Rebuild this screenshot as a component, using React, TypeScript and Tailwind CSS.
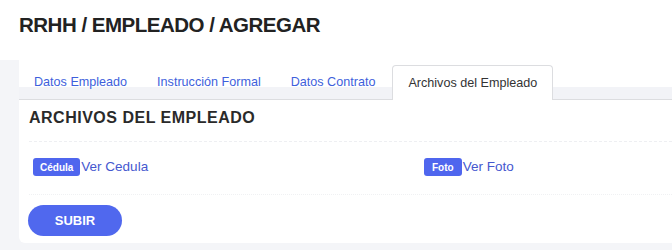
export default function App() {
  const tabs = ['Datos Empleado', 'Instrucción Formal', 'Datos Contrato'];

  return (
    <div className="w-[672px] h-[250px] overflow-hidden bg-white font-['Liberation_Sans',Arial,sans-serif]">
      <div className="h-[60px] pl-[19px] pt-[12px]">
        <h1 className="text-[20.5px] leading-[25px] font-bold tracking-[-0.5px] text-[#222]">RRHH / EMPLEADO / AGREGAR</h1>
      </div>

      <div className="bg-[#f4f5f8] pl-[19px]">
        <div className="h-[40px] flex items-end bg-[linear-gradient(to_bottom,#ffffff_0,#ffffff_27px,#f2f3f7_27px)] border-b border-[#dcdde0]">
          {tabs.map((t) => (
            <div key={t} className="h-[34px] px-[15px] flex items-center text-[12.6px] text-[#3e5fdc]">
              {t}
            </div>
          ))}
          <div className="h-[35px] ml-[2px] -mb-px px-[15px] flex items-center text-[12.6px] text-[#333] bg-white border border-b-0 border-[#dcdde0] rounded-t-[4px]">
            Archivos del Empleado
          </div>
        </div>

        <div className="h-[143px] bg-white rounded-bl-[6px] pl-[10px] pt-[8px]">
          <h2 className="text-[16px] leading-[20px] font-bold tracking-[0.5px] text-[#2a2a2a]">ARCHIVOS DEL EMPLEADO</h2>
          <div className="mt-[13px] border-t border-dashed border-[#eeeff2]" />
          <div className="grid grid-cols-[391px_1fr] pl-[4px] pt-[15px] pb-[17px]">
            <div className="flex items-center">
              <span className="h-[18px] px-[7px] flex items-center rounded-[3px] bg-[#4f66ee] text-white text-[10px] font-bold">Cédula</span>
              <span className="ml-px text-[13.5px] text-[#4558cf]">Ver Cedula</span>
            </div>
            <div className="flex items-center">
              <span className="h-[18px] px-[8px] flex items-center rounded-[3px] bg-[#4f66ee] text-white text-[10px] font-bold">Foto</span>
              <span className="ml-px text-[13.5px] text-[#4558cf]">Ver Foto</span>
            </div>
          </div>
          <div className="border-t border-dotted border-[#f0f1f3]" />
          <button className="mt-[10px] -ml-px w-[94px] h-[31px] rounded-full bg-[#5068ee] text-white text-[13px] font-bold">SUBIR</button>
        </div>
        <div className="h-[7px]" />
      </div>
    </div>
  );
}
